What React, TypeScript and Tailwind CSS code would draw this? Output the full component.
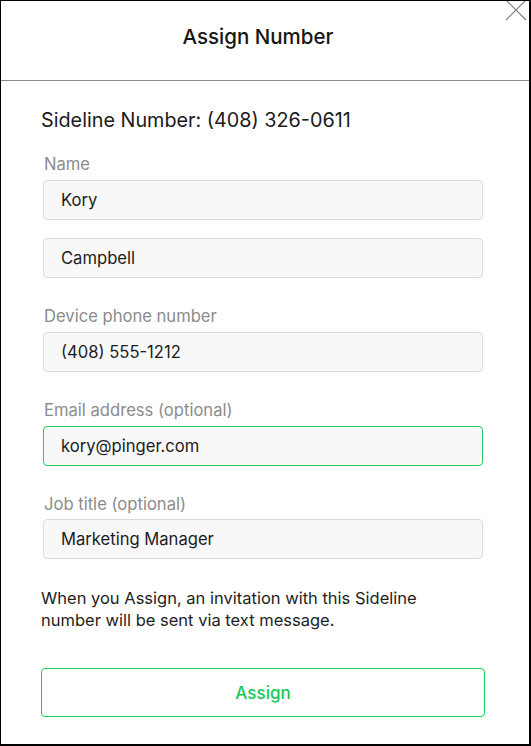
import React from "react";

const font = { fontFamily: "Inter, 'Noto Sans', sans-serif" };

function Field({ value, focused = false, className = "" }: { value: string; focused?: boolean; className?: string }) {
  return (
    <div
      className={`ml-[2px] flex h-[40px] w-[440px] items-center rounded-[4px] border bg-[#f8f8f8] pl-[17px] text-[16.6px] text-[#1c1c1c] ${
        focused ? "border-[#2ec866]" : "border-[#dcdcdc]"
      } ${className}`}
    >
      {value}
    </div>
  );
}

function Label({ text, className = "" }: { text: string; className?: string }) {
  return <div className={`ml-[3px] text-[16.6px] leading-[20px] text-[#8c8c8c] ${className}`}>{text}</div>;
}

export default function App() {
  return (
    <div
      style={font}
      className="relative h-[746px] w-[531px] overflow-hidden border-l border-t border-r-2 border-b-2 border-black bg-white"
    >
      <svg className="absolute left-[504px] top-[-1px]" width="22" height="22" viewBox="0 0 22 22">
        <path d="M1 0 L21 20 M21 0 L1 20" stroke="#7a7a7a" strokeWidth="1.1" fill="none" />
      </svg>
      <div className="flex h-[80px] items-center justify-center border-b border-[#8a8a8a] pb-[6px] pr-[14px] text-[20.5px] font-medium text-[#161616]">
        Assign Number
      </div>
      <div className="flex flex-col pl-[40px] pt-[27px]">
        <div className="text-[19.8px] leading-[24px] text-[#1a1a1a]">Sideline Number: (408) 326-0611</div>
        <Label text="Name" className="mt-[22px]" />
        <Field value="Kory" className="mt-[6px]" />
        <Field value="Campbell" className="mt-[18px]" />
        <Label text="Device phone number" className="mt-[28px]" />
        <Field value="(408) 555-1212" className="mt-[6px]" />
        <Label text="Email address (optional)" className="mt-[28px]" />
        <Field value="kory@pinger.com" focused className="mt-[6px]" />
        <Label text="Job title (optional)" className="mt-[28px]" />
        <Field value="Marketing Manager" className="mt-[5px]" />
        <p className="mt-[28px] w-[400px] text-[16.5px] leading-[22px] text-[#1e1e1e]">
          When you Assign, an invitation with this Sideline number will be sent via text message.
        </p>
        <button className="mt-[37px] flex h-[49px] w-[444px] items-center justify-center rounded-[4px] border border-[#12d15a] bg-white pt-[2px] text-[17px] font-medium text-[#14c95a]">
          Assign
        </button>
      </div>
    </div>
  );
}
